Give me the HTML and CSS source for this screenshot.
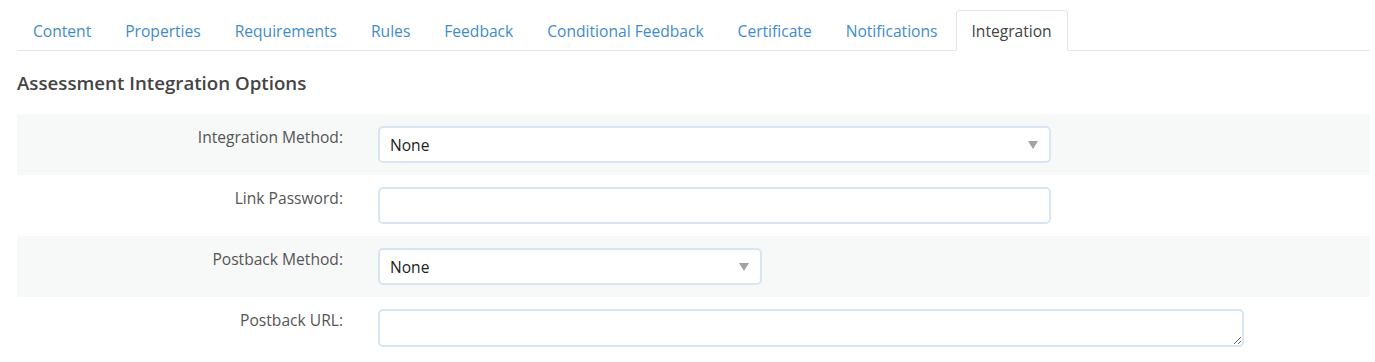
FILE: index.html
```html
<!DOCTYPE html>
<html lang="en">
<head>
  <meta charset="UTF-8">
  <title>Assessment Integration</title>
  <meta name="viewport" content="width=device-width, initial-scale=1.0">
  <link rel="stylesheet" href="styles.css">
</head>
<body>
  <div class="page">
    <ul class="tabs">
      <li><a>Content</a></li>
      <li><a>Properties</a></li>
      <li><a>Requirements</a></li>
      <li><a>Rules</a></li>
      <li><a>Feedback</a></li>
      <li><a>Conditional Feedback</a></li>
      <li><a>Certificate</a></li>
      <li><a>Notifications</a></li>
      <li class="active"><a>Integration</a></li>
    </ul>

    <h2 class="section-title">Assessment Integration Options</h2>

    <form class="options">
      <div class="row">
        <label class="row-label" for="method">Integration Method:</label>
        <div class="select-wrap wide">
          <select id="method" class="control">
            <option>None</option>
          </select>
          <svg class="caret" width="10" height="8" viewBox="0 0 10 8"><path d="M0 0 L10 0 L5 8 Z" fill="#a3a3a3"/></svg>
        </div>
      </div>
      <div class="row">
        <label class="row-label" for="password">Link Password:</label>
        <input id="password" type="text" class="control wide">
      </div>
      <div class="row">
        <label class="row-label" for="postback">Postback Method:</label>
        <div class="select-wrap narrow">
          <select id="postback" class="control">
            <option>None</option>
          </select>
          <svg class="caret" width="10" height="8" viewBox="0 0 10 8"><path d="M0 0 L10 0 L5 8 Z" fill="#a3a3a3"/></svg>
        </div>
      </div>
      <div class="row">
        <label class="row-label" for="url">Postback URL:</label>
        <textarea id="url" class="control area"></textarea>
      </div>
    </form>
  </div>
</body>
</html>
```

FILE: styles.css
```css
/* Integration tab */
body {
  font-family: "Open Sans", Arial, sans-serif;
  margin: 0;
  padding: 0;
  background: #fff;
  color: #444;
}
.page {
  padding: 10px 5px 0 17px;
}
.tabs {
  list-style: none;
  margin: 0;
  padding: 0;
  display: flex;
  border-bottom: 1px solid #e3e5e8;
  height: 40px;
}
.tabs li {
  margin-right: 2px;
}
.tabs a {
  display: block;
  height: 40px;
  box-sizing: border-box;
  padding: 9px 15px 0;
  font-size: 15.6px;
  line-height: 22px;
  color: #3f8ccc;
  border: 1px solid transparent;
  border-radius: 4px 4px 0 0;
  cursor: pointer;
}
.tabs li.active a {
  color: #444;
  background: #fff;
  border-color: #e3e5e8;
  border-bottom-color: #fff;
  height: 41px;
}
.section-title {
  font-size: 18.7px;
  font-weight: 600;
  color: #444;
  margin: 19px 0 18px;
  line-height: 26px;
}
.options {
  margin: 0;
}
.row {
  display: flex;
  align-items: flex-start;
  padding: 12px 0;
}
.row:nth-child(odd) {
  background: #f7f8f8;
}
.row-label {
  width: 326px;
  flex: none;
  text-align: right;
  font-size: 15.6px;
  line-height: 20px;
  color: #555;
  padding-top: 1px;
  margin-right: 35px;
}
.control {
  display: block;
  box-sizing: border-box;
  height: 37px;
  margin: 0;
  padding: 0 10px;
  font-family: "Open Sans", Arial, sans-serif;
  font-size: 15.6px;
  color: #222;
  background: #fff;
  border: 2px solid #d8e6f3;
  border-radius: 5px;
  outline: none;
}
.wide {
  width: 673px;
}
.narrow {
  width: 384px;
}
.select-wrap {
  position: relative;
}
.select-wrap select {
  width: 100%;
  appearance: none;
  -webkit-appearance: none;
}
.caret {
  position: absolute;
  right: 13px;
  top: 15px;
  pointer-events: none;
}
.area {
  width: 866px;
  height: 38px;
  resize: vertical;
  padding: 6px 10px;
}
```
